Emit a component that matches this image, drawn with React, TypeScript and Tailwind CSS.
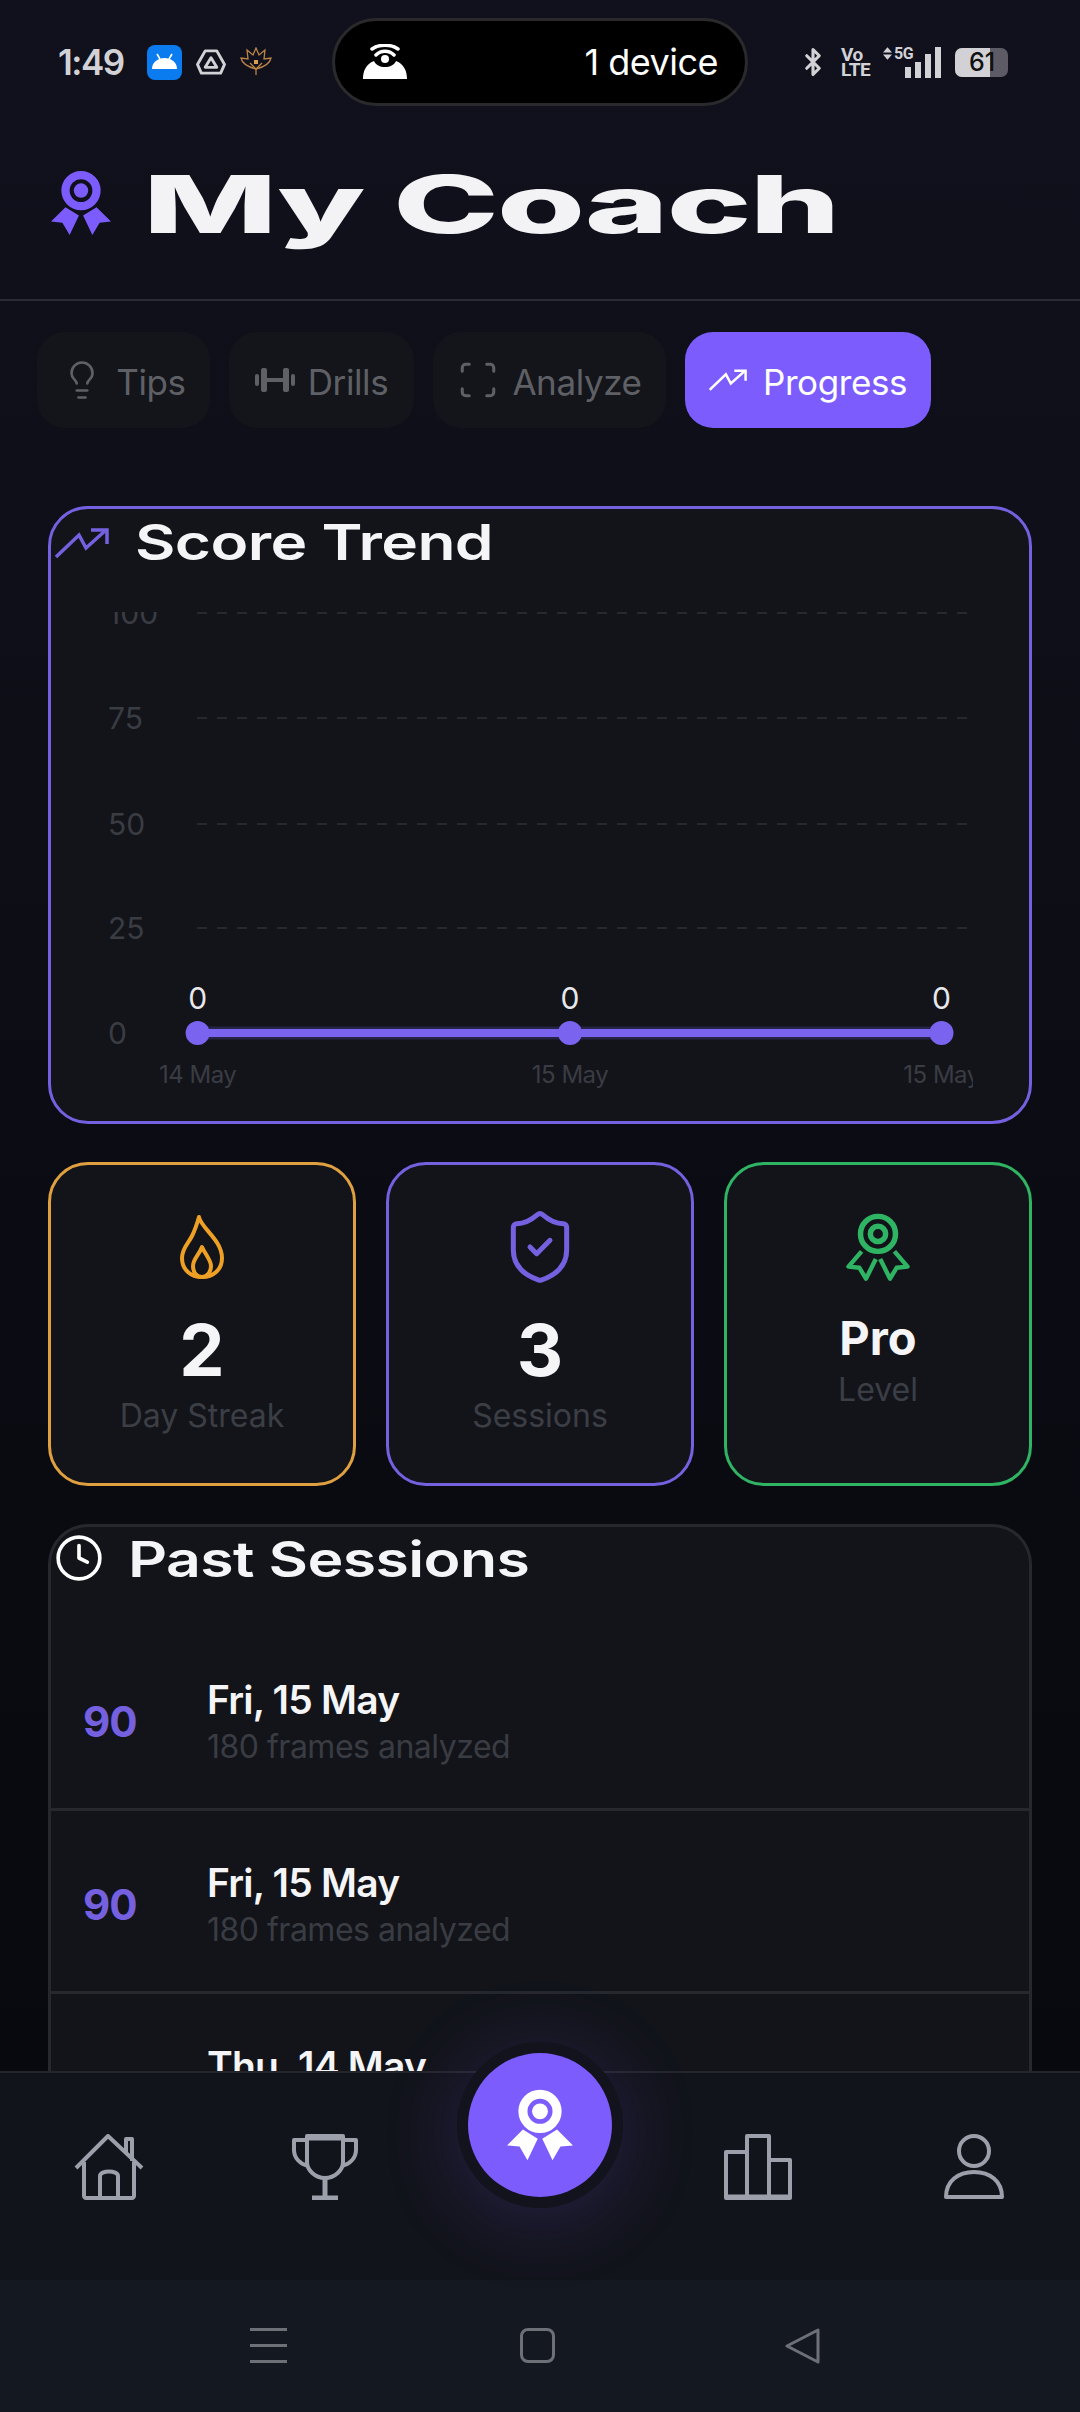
import React from 'react';
import { Bluetooth, Clock, Lightbulb, Scan, ShieldCheck } from 'lucide-react';

const BODY = "font-['Inter',sans-serif]";

// Rosette used in the header, the level card and the centre nav button
const Medal = ({ className, solid }: { className?: string; solid?: boolean }) => (
  <svg viewBox="0 0 58 64" className={className} fill="none">
    {solid ? (
      <>
        <path d="M14 36 L0 50 L11 51 L18 63 L27 44 Z" fill="currentColor" />
        <path d="M44 36 L58 50 L47 51 L40 63 L31 44 Z" fill="currentColor" />
        <circle cx="29" cy="20" r="15" stroke="currentColor" strokeWidth="8" />
        <circle cx="29" cy="20" r="7" fill="currentColor" />
      </>
    ) : (
      <>
        <path d="M14 36 L2 50 L12 51 L18 61 L27 43" stroke="currentColor" strokeWidth="4" strokeLinejoin="round" />
        <path d="M44 36 L56 50 L46 51 L40 61 L31 43" stroke="currentColor" strokeWidth="4" strokeLinejoin="round" />
        <circle cx="29" cy="20" r="16" stroke="currentColor" strokeWidth="5" />
        <circle cx="29" cy="20" r="7" stroke="currentColor" strokeWidth="5" />
      </>
    )}
  </svg>
);

const Flame = ({ className }: { className?: string }) => (
  <svg viewBox="0 0 46 66" className={className} fill="none" stroke="currentColor" strokeWidth="4" strokeLinejoin="round">
    <path d="M20 3 C22 14 43 26 43 44 C43 56 34 63 23 63 C12 63 3 56 3 44 C3 34 9 30 13 22 C16 16 18 10 20 3 Z" />
    <path d="M23 33 C26 40 32 46 32 52 C32 59 27 63 23 63 C18 63 14 59 14 52 C14 45 20 41 23 33 Z" />
  </svg>
);

const Barbell = ({ className }: { className?: string }) => (
  <svg viewBox="0 0 40 26" className={className} fill="currentColor">
    <rect x="0" y="7" width="4" height="12" rx="2" />
    <rect x="6" y="1" width="6" height="24" rx="2" />
    <rect x="12" y="11" width="16" height="4" />
    <rect x="28" y="1" width="6" height="24" rx="2" />
    <rect x="36" y="7" width="4" height="12" rx="2" />
  </svg>
);

// Zigzag arrow, taller than lucide's trending-up
const Trend = ({ className }: { className?: string }) => (
  <svg viewBox="0 0 54 32" className={className} fill="none" stroke="currentColor" strokeWidth="3.5">
    <path d="M1 30 L24 8 L31 21 L51 3" />
    <path d="M36 3 H52 V17" />
  </svg>
);

const tabs = [
  { label: 'Tips', icon: <Lightbulb className="w-[42px] h-[42px]" strokeWidth={1.5} />, width: 'w-[173px]' },
  { label: 'Drills', icon: <Barbell className="w-[40px] h-[26px]" />, width: 'w-[185px]' },
  { label: 'Analyze', icon: <Scan className="w-[42px] h-[42px]" strokeWidth={1.75} />, width: 'w-[233px]' },
];

const sessions = [
  { score: 90, date: 'Fri, 15 May', frames: '180 frames analyzed' },
  { score: 90, date: 'Fri, 15 May', frames: '180 frames analyzed' },
  { score: 85, date: 'Thu, 14 May', frames: '180 frames analyzed' },
];

const StatusBar = () => (
  <div className={`h-[110px] pt-[18px] flex items-start text-[#d2d2d6] ${BODY}`}>
    <div className="w-[332px] h-[88px] pl-[58px] flex items-center gap-[13px]">
      <span className="text-[35px] font-semibold tracking-[-1.5px] mr-[10px]">1:49</span>
      <svg viewBox="0 0 35 35" className="w-[35px] h-[35px]">
        <rect width="35" height="35" rx="8" fill="#0a7cf0" />
        <path d="M5 24 C5 17 11 13 17.5 13 C24 13 30 17 30 24 Z" fill="#fff" />
        <path d="M10 9 L13 14 M25 9 L22 14" stroke="#fff" strokeWidth="1.6" />
      </svg>
      <svg viewBox="0 0 32 30" className="w-[32px] h-[29px]" fill="none" stroke="#d2d2d6" strokeWidth="3" strokeLinejoin="round">
        <path d="M10 3 H22 L30 17 L26 26 H6 L2 17 Z" />
        <path d="M16 10 L22 20 H10 Z" />
      </svg>
      <svg viewBox="0 0 32 30" className="w-[32px] h-[30px]" fill="none" stroke="#b98345" strokeWidth="1.3">
        <path d="M16 22 C8 20 2 16 1 11 L8 12 L7 3 L13 8 L16 1 L19 8 L25 3 L24 12 L31 11 C30 16 24 20 16 22 Z" />
        <path d="M16 22 V28 M10 16 L16 22 L22 16" />
        <rect x="14" y="13" width="4" height="4" fill="#d8a050" stroke="none" />
      </svg>
    </div>
    <div className="w-[416px] h-[88px] rounded-full bg-black border-[3px] border-[#2a2a2d] flex items-center justify-between pl-[27px] pr-[27px]">
      <svg viewBox="0 0 46 36" className="w-[46px] h-[36px]" fill="none">
        <path d="M1 35 C1 27 4 20 12 17 C14 21 18 23 23 23 C28 23 32 21 34 17 C42 20 45 27 45 35 Z" fill="#fff" />
        <circle cx="23" cy="15" r="4" fill="#fff" />
        <path d="M14 11 C19 6 27 6 32 11 M10 5 C17 0 29 0 36 5" stroke="#fff" strokeWidth="3.5" strokeLinecap="round" />
      </svg>
      <span className="text-[36px] text-white tracking-[-0.5px]">1 device</span>
    </div>
    <div className="flex-1 h-[88px] pl-[51px] flex items-center gap-[14px]">
      <Bluetooth className="w-[30px] h-[36px] -mx-[1px]" strokeWidth={2.5} />
      <div className="w-[28px] flex flex-col text-[19px] leading-[15px] font-bold tracking-[-0.5px] font-['Roboto',sans-serif]">
        <span>Vo</span>
        <span>LTE</span>
      </div>
      <div className="relative w-[58px] h-[31px] flex items-end justify-end gap-[4px]">
        <svg viewBox="0 0 10 14" className="absolute left-[0px] top-[0px] w-[9px] h-[13px]" fill="#d2d2d6">
          <path d="M5 0 L10 6 H0 Z M0 8 H10 L5 14 Z" />
        </svg>
        <span className="absolute left-[11px] -top-[2px] text-[16px] leading-[17px] font-bold tracking-[-0.5px] font-['Roboto',sans-serif]">5G</span>
        <div className="w-[6px] h-[11px] bg-[#d2d2d6]" />
        <div className="w-[6px] h-[16px] bg-[#d2d2d6]" />
        <div className="w-[6px] h-[24px] bg-[#d2d2d6]" />
        <div className="w-[6px] h-[31px] bg-[#d2d2d6]" />
      </div>
      <div className="relative w-[53px] h-[29px] rounded-[7px] bg-[#5d5c66] overflow-hidden flex">
        <div className="w-[35px] h-full bg-[#d2d2d6]" />
        <span className="absolute left-[14px] top-0 text-[#111] text-[25px] leading-[29px] font-medium">61</span>
      </div>
    </div>
  </div>
);

const Header = () => (
  <div className="h-[191px] border-b-[2px] border-[#2a2b33] pl-[51px] pt-[57px] flex items-start overflow-hidden">
    <Medal solid className="w-[60px] h-[68px] text-[#7c5cfc] mt-[2px]" />
    <h1 className={`ml-[32px] -mt-[5px] text-[80px] leading-[84px] font-extrabold text-[#f3f3f5] origin-left scale-x-[1.78] whitespace-nowrap tracking-[-1px] ${BODY}`}>
      My Coach
    </h1>
  </div>
);

const Tabs = () => (
  <div className={`mt-[31px] pl-[37px] flex gap-[19px] ${BODY}`}>
    {tabs.map(t => (
      <div key={t.label} className={`${t.width} h-[96px] rounded-[28px] bg-[#14151a] flex items-center justify-center gap-[13px] text-[#5e6066]`}>
        {t.icon}
        <span className="text-[35px] pt-[5px] tracking-[-0.4px]">{t.label}</span>
      </div>
    ))}
    <div className="w-[246px] h-[96px] rounded-[28px] bg-[#7c5cfc] flex items-center justify-center gap-[16px] text-white">
      <Trend className="w-[38px] h-[24px]" />
      <span className="text-[35px] pt-[5px] tracking-[-0.4px]">Progress</span>
    </div>
  </div>
);

const ScoreChart = () => {
  const xs = [107.6, 480, 851.5];
  const dates = ['14 May', '15 May', '15 May'];
  return (
    <svg viewBox="0 0 883 490" className={`w-[883px] h-[490px] ml-[39px] mt-[33px] ${BODY}`}>
      {[1, 106, 212, 316].map(y => (
        <line key={y} x1="107" x2="883" y1={y} y2={y} stroke="#26282e" strokeWidth="2" strokeDasharray="10 10" />
      ))}
      {[['100', 12], ['75', 117], ['50', 223], ['25', 327], ['0', 432]].map(([t, y]) => (
        <text key={t} x="18" y={y} fontSize="30" fill="#3a3c43">{t}</text>
      ))}
      <line x1={xs[0]} x2={xs[2]} y1="421" y2="421" stroke="#7a63ee" strokeOpacity="0.2" strokeWidth="13" />
      <line x1={xs[0]} x2={xs[2]} y1="421" y2="421" stroke="#7a63ee" strokeWidth="8" />
      {xs.map((x, i) => (
        <g key={i}>
          <circle cx={x} cy="421" r="12" fill="#7a63ee" />
          <text x={x} y="397" fontSize="30" fill="#e8e8ec" textAnchor="middle">0</text>
          <text x={x} y="471" fontSize="24" letterSpacing="-0.5" fill="#3a3c43" textAnchor="middle">{dates[i]}</text>
        </g>
      ))}
    </svg>
  );
};

const StatCard = ({ border, icon, value, valueClass, label }: { border: string; icon: React.ReactNode; value: string; valueClass: string; label: string }) => (
  <div className={`flex-1 h-[324px] rounded-[40px] bg-[#12141a] border-[3px] ${border} flex flex-col items-center pt-[48px] ${BODY}`}>
    <div className="h-[68px] flex items-center">{icon}</div>
    <span className={`${valueClass} font-bold text-[#f5f5f7]`}>{value}</span>
    <span className="mt-[4px] text-[32px] leading-[40px] text-[#3c3e45]">{label}</span>
  </div>
);

const SessionRow = ({ score, date, frames }: { score: number; date: string; frames: string }) => (
  <div className="h-[183px] border-b-[3px] border-[#26282e] flex items-center pl-[32px] shrink-0">
    <span className="w-[124px] pt-[6px] text-[42px] font-bold text-[#7560e0] tracking-[-1px]">{score}</span>
    <div className="flex flex-col pt-[7px]">
      <span className="text-[39px] leading-[50px] font-semibold text-[#f5f5f7] tracking-[-0.8px]">{date}</span>
      <span className="text-[32px] leading-[43px] text-[#3a3c43] tracking-[-0.5px]">{frames}</span>
    </div>
  </div>
);

const BottomNav = () => (
  <div className="relative z-10 h-[209px] border-t-[2px] border-[#24262c] bg-[#12141b] text-[#9ca0aa]">
    <div className="h-full flex items-start pt-[61px]">
      <svg viewBox="0 0 70 66" className="ml-[74px] w-[70px] h-[66px]" fill="none" stroke="currentColor" strokeWidth="4" strokeLinejoin="round">
        <path d="M2 34 L34 2 L68 34" />
        <path d="M52 18 V5 H58 V27" />
        <path d="M10 28 V62 C10 63 11 64 12 64 H58 C59 64 60 63 60 62 V28" />
        <path d="M26 64 V42 C26 36 44 36 44 42 V64" />
      </svg>
      <svg viewBox="0 0 66 66" className="ml-[148px] w-[66px] h-[66px]" fill="none" stroke="currentColor" strokeWidth="4" strokeLinejoin="round">
        <path d="M15 2 H51 V28 C51 36 43 44 33 44 C23 44 15 36 15 28 Z" fill="none" />
        <path d="M15 6 H2 V16 C2 24 8 30 16 32 M51 6 H64 V16 C64 24 58 30 50 32" />
        <path d="M33 44 V62 M20 64 H46" strokeWidth="5" />
        <path d="M15 4 H51" strokeWidth="5" />
      </svg>
      <svg viewBox="0 0 68 66" className="ml-[366px] w-[68px] h-[66px]" fill="none" stroke="currentColor" strokeWidth="4" strokeLinejoin="round">
        <path d="M2 18 H23 V64 H2 Z" />
        <path d="M23 2 H45 V64 H23 Z" />
        <path d="M45 26 H66 V64 H45 Z" />
        <path d="M2 63 H66" strokeWidth="5" />
      </svg>
      <svg viewBox="0 0 60 66" className="ml-[152px] w-[60px] h-[66px]" fill="none" stroke="currentColor" strokeWidth="4">
        <ellipse cx="30" cy="17" rx="15" ry="15" />
        <path d="M2 63 C2 47 14 38 30 38 C46 38 58 47 58 63 Z" strokeLinejoin="round" />
      </svg>
    </div>
    {/* centre button sits over the top edge of the bar */}
    <div className="absolute left-[457px] -top-[31px] w-[166px] h-[166px] rounded-full bg-[#12131c] shadow-[0_10px_80px_rgba(124,92,255,0.2)] flex items-center justify-center">
      <div className="w-[144px] h-[144px] rounded-full bg-[#7c5cfc] flex items-center justify-center">
        <Medal solid className="w-[66px] h-[74px] text-white" />
      </div>
    </div>
  </div>
);

const SystemNav = () => (
  <div className="h-[132px] bg-[#141820] flex items-start pt-[48px]">
    <div className="ml-[250px] w-[37px] h-[35px] flex flex-col justify-between">
      <div className="h-[3px] bg-[#6e7078]" />
      <div className="h-[3px] bg-[#6e7078]" />
      <div className="h-[3px] bg-[#6e7078]" />
    </div>
    <div className="ml-[233px] w-[35px] h-[35px] rounded-[8px] border-[3px] border-[#6e7078]" />
    <svg viewBox="0 0 36 36" className="ml-[230px] w-[36px] h-[36px]" fill="none" stroke="#6e7078" strokeWidth="3" strokeLinejoin="round">
      <path d="M2 18 L33 2 V34 Z" />
    </svg>
  </div>
);

const App: React.FC = () => {
  return (
    <div className="w-[1080px] h-[2412px] overflow-hidden flex flex-col bg-linear-to-b from-[#10111c] via-[#0b0c13] to-[#06080c]">
      <StatusBar />
      <Header />
      <Tabs />

      {/* Scrolling content, cut off by the bottom nav */}
      <div className="flex-1 min-h-0 overflow-hidden px-[48px] pt-[78px] flex flex-col gap-[38px]">
        <div className="h-[618px] shrink-0 rounded-[40px] border-[3px] border-[#7560e0] bg-[#12141a]">
          <div className={`flex items-start pl-[4px] h-[70px] ${BODY}`}>
            <Trend className="w-[54px] h-[32px] text-[#7560e0] mt-[18px]" />
            <h2 className="ml-[26px] mt-[4px] text-[49px] leading-[60px] font-semibold text-[#f5f5f7] origin-left scale-x-[1.27] whitespace-nowrap tracking-[-0.5px]">Score Trend</h2>
          </div>
          <ScoreChart />
        </div>

        <div className="flex gap-[30px] shrink-0">
          <StatCard border="border-[#e0a040]" icon={<Flame className="w-[46px] h-[66px] text-[#eea024]" />} value="2" valueClass="text-[72px] leading-[84px] mt-[27px]" label="Day Streak" />
          <StatCard border="border-[#7560e0]" icon={<ShieldCheck className="w-[80px] h-[80px] text-[#7560e0]" strokeWidth={1.5} />} value="3" valueClass="text-[72px] leading-[84px] mt-[27px]" label="Sessions" />
          <StatCard border="border-[#2fb464]" icon={<Medal className="w-[66px] h-[70px] text-[#2fb464]" />} value="Pro" valueClass="text-[47px] leading-[56px] mt-[29px]" label="Level" />
        </div>

        <div className={`shrink-0 rounded-t-[40px] border-[3px] border-b-0 border-[#26282e] bg-[#12141a] flex flex-col ${BODY}`}>
          <div className="h-[101px] flex items-start pl-[3px] pt-[6px]">
            <Clock className="w-[50px] h-[50px] text-white" strokeWidth={1.75} />
            <h2 className="ml-[24px] text-[49px] leading-[54px] font-semibold text-[#f5f5f7] origin-left scale-x-[1.24] whitespace-nowrap tracking-[-0.5px]">Past Sessions</h2>
          </div>
          {sessions.map((s, i) => (
            <SessionRow key={i} {...s} />
          ))}
        </div>
      </div>

      <BottomNav />
      <SystemNav />
    </div>
  );
};

export default App;
